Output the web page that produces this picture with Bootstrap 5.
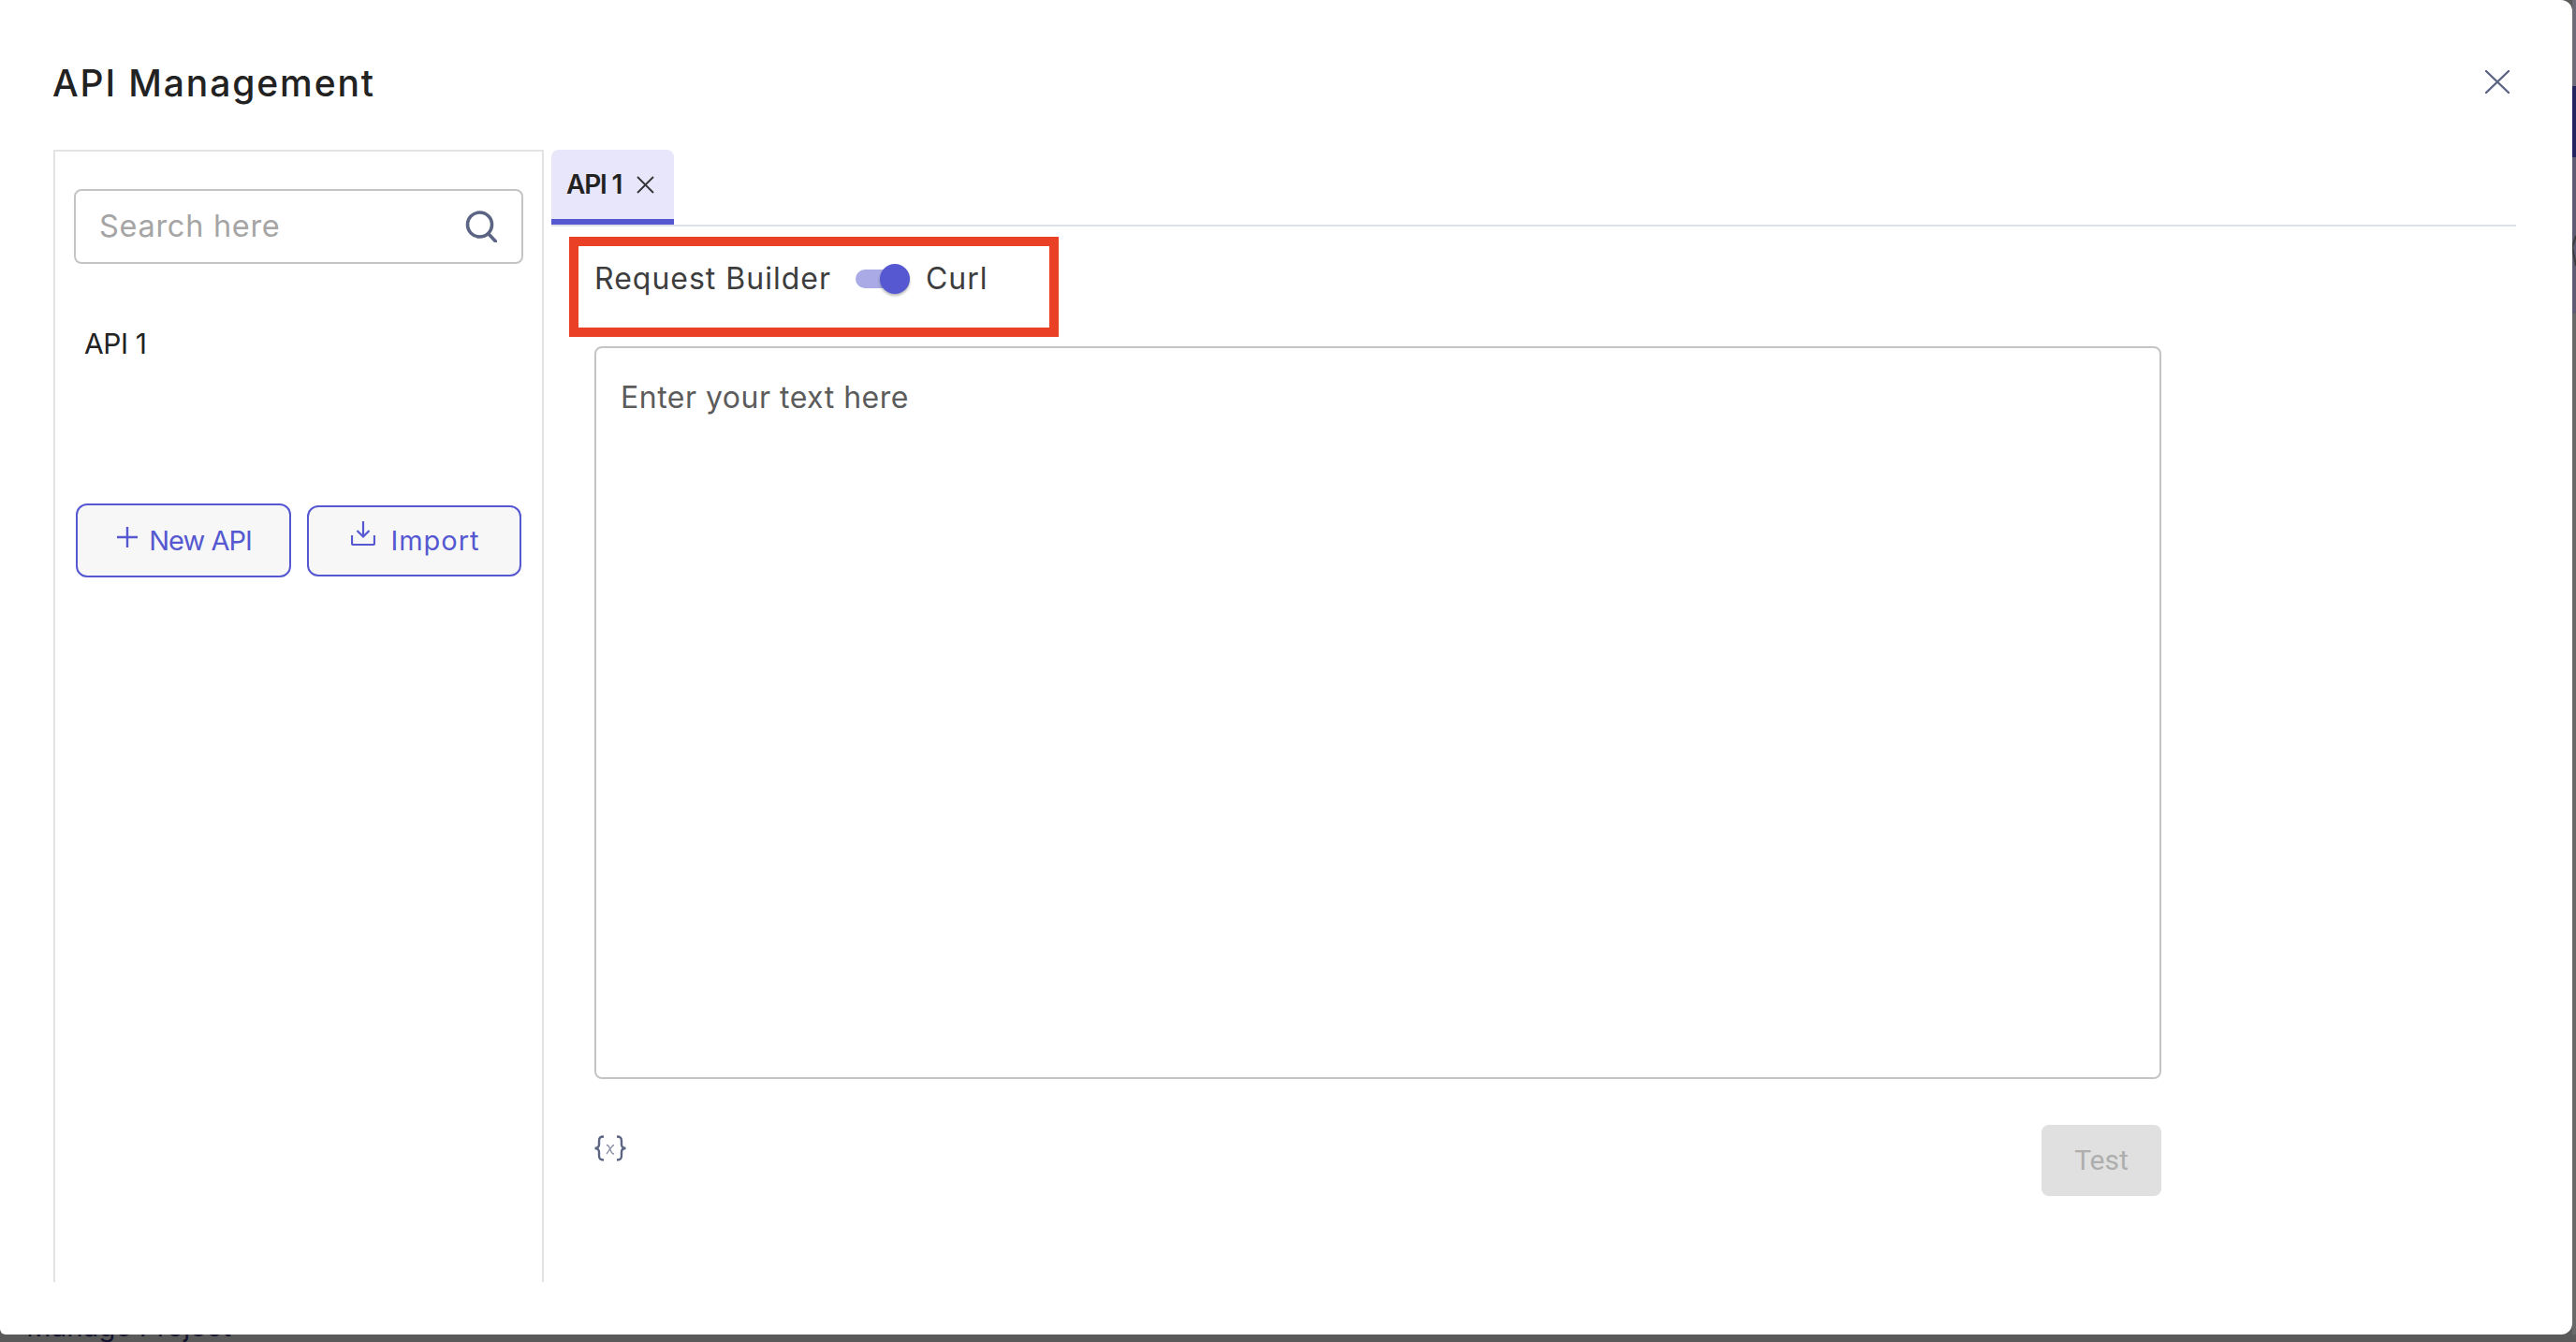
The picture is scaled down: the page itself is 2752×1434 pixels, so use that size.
<!DOCTYPE html>
<html lang="en">
<head>
<meta charset="utf-8">
<title>API Management</title>
<link href="https://cdn.jsdelivr.net/npm/bootstrap@5.3.0/dist/css/bootstrap.min.css" rel="stylesheet">
<style>
html,body{height:100%;}
body{background:#5a5a5a;overflow:hidden;font-family:"Inter","Liberation Sans",sans-serif;position:relative;}
.behind-text{position:absolute;left:28px;top:1400px;font-size:29.5px;color:#14142e;line-height:1.2;white-space:nowrap;}
.behind-strip{position:absolute;right:0;top:0;width:4px;height:1426px;background:linear-gradient(#6e6c78 0,#6e6c78 92px,#25235f 92px,#25235f 168px,#5f5b73 168px,#5f5b73 335px,#686868 335px);}
.behind-strip svg{display:block;margin-top:250px;}
.dialog{position:relative;width:2748px;height:1426px;background:#fff;border-radius:0 12px 12px 6px;padding:0 60px 0 57px;}
.dlg-title{height:160px;}
.dlg-title h5{font-size:39px;font-weight:500;color:#222;margin:16px 0 0 -1px;letter-spacing:1.9px;line-height:1;}
.side-pane{width:524px;height:1210px;border:solid #e3e3e3;border-width:2px 2px 0 2px;padding:40px 20px 0 20px;flex:none;}
.search-box{height:80px;border:2px solid #c4c4c4;border-radius:8px;padding:0 26px 0 25px;color:#a5a5a5;font-size:32.5px;letter-spacing:.7px;background:#fff;}
.api-item{font-size:30px;color:#222;margin:67px 0 0 11px;line-height:36px;height:36px;letter-spacing:-.4px;}
.btn-row{margin-top:153px;gap:17px;padding:0 2px;}
.btn-api{height:79px;width:230px;background:#f7f7f7;border:2px solid #5558d0;border-radius:12px;color:#5558d0;font-size:29px;padding:0 0 0 2px;display:flex;align-items:center;justify-content:center;gap:12px;}
.btn-api:hover{background:#f7f7f7;color:#5558d0;border-color:#5558d0;}
.btn-new span{letter-spacing:-1px;}
.btn-new svg{margin-bottom:8px;}
.btn-imp{height:76px;width:229px;gap:16px;padding-left:3px;}
.btn-imp span{letter-spacing:1px;}
.btn-imp svg{margin-bottom:16px;}
.main-pane{flex:1;margin-left:8px;min-width:0;}
.tab-strip{border-bottom:2px solid #dee2e6;height:82px;}
.tab-item{width:131px;height:80px;background:#e8e6fb;border-bottom:6px solid #5558d0;border-radius:8px 8px 0 0;padding-left:16px;gap:16px;font-size:28px;font-weight:600;color:#222;letter-spacing:-1.2px;}
.mode-box{width:523px;height:107px;margin:11px 0 0 19px;border:10px solid #ea4025;padding:0 0 17px 17px;font-size:32px;color:#3d3d3d;letter-spacing:1px;}
.switch-track{position:relative;width:50px;height:20px;background:#aaaae6;border-radius:10px;margin:0 25px 0 26px;}
.switch-thumb{position:absolute;right:-8px;top:-6px;width:32px;height:32px;border-radius:50%;background:#5558d0;box-shadow:0 2px 3px rgba(0,0,0,.3);}
.body-area{width:1674px;margin-left:46px;}
.text-box{height:783px;margin-top:10px;border:2px solid #c4c4c4;border-radius:8px;padding:33px 26px;font-size:32px;color:#5c5c5c;line-height:40px;letter-spacing:.5px;}
.foot-row{margin-top:49px;}
.btn-test{width:128px;height:76px;background:#e0e0e0;border:0;border-radius:8px;color:#aeaeae;font-size:30px;padding:0 0 2px;font-family:"Roboto","Inter",sans-serif;}
.btn-test:disabled{background:#e0e0e0;color:#aeaeae;opacity:1;}
.var-icon{width:36px;height:28px;margin:11px 0 0 -1px;}
.close-x{position:absolute;left:2655px;top:75px;width:26px;height:25px;background:none;border:0;padding:0;display:block;}
.close-x svg{display:block;}
</style>
</head>
<body>
<div class="behind-strip"><svg width="4" height="36" viewBox="0 0 4 36"><path d="M4 2 0 14 4 34" stroke="#3a3a3a" stroke-width="2" fill="none"/></svg></div>
<div class="behind-text">Manage Project</div>
<div class="dialog">
  <div class="dlg-title d-flex align-items-center"><h5>API Management</h5></div>
  <button class="close-x" aria-label="Close"><svg width="26" height="25" viewBox="0 0 26 25"><path d="M1 1 25 24M25 1 1 24" stroke="#5b6583" stroke-width="2.400" stroke-linecap="round" fill="none"/></svg></button>
  <div class="d-flex">
    <aside class="side-pane">
      <div class="search-box d-flex align-items-center justify-content-between">
        <span>Search here</span>
        <svg width="34" height="34" viewBox="0 0 34 34"><circle cx="15.500" cy="15" r="13" stroke="#5b6583" stroke-width="3.600" fill="none"/><path d="M25 25 32.500 33" stroke="#5b6583" stroke-width="3.600" stroke-linecap="round"/></svg>
      </div>
      <div class="api-item">API 1</div>
      <div class="btn-row d-flex align-items-center">
        <button class="btn btn-api btn-new"><svg width="22" height="22" viewBox="0 0 22 22"><path d="M11 0V22M0 11H22" stroke="#5558d0" stroke-width="2.400"/></svg><span>New API</span></button>
        <button class="btn btn-api btn-imp"><svg width="26" height="26" viewBox="0 0 26 26"><path d="M13 0V16M6.500 10 13 16.500 19.500 10" stroke="#5558d0" stroke-width="2.200" fill="none"/><path d="M1 15V23.500Q1 25 2.500 25H23.500Q25 25 25 23.500V15" stroke="#5558d0" stroke-width="2.200" fill="none"/></svg><span>Import</span></button>
      </div>
    </aside>
    <main class="main-pane">
      <div class="tab-strip">
        <div class="tab-item d-flex align-items-center">
          <span>API 1</span>
          <svg width="19" height="19" viewBox="0 0 19 19"><path d="M1 1 18 18M18 1 1 18" stroke="#333" stroke-width="1.800" fill="none"/></svg>
        </div>
      </div>
      <div class="mode-box d-flex align-items-center">
        <span>Request Builder</span>
        <span class="switch-track"><span class="switch-thumb"></span></span>
        <span>Curl</span>
      </div>
      <div class="body-area">
        <div class="text-box">Enter your text here</div>
        <div class="foot-row d-flex justify-content-between align-items-start">
          <svg class="var-icon" viewBox="0 0 36 28"><path d="M11 1.500C7 1.500 6 3 6 6V10C6 12.500 4.500 14 1.500 14 4.500 14 6 15.500 6 18V22C6 25 7 26.500 11 26.500M25 1.500C29 1.500 30 3 30 6V10C30 12.500 31.500 14 34.500 14 31.500 14 30 15.500 30 18V22C30 25 29 26.500 25 26.500" stroke="#5b6583" stroke-width="2.400" fill="none"/><path d="M14 10.500C16.500 10.500 17 13 18 15.500 19 18.500 20 20 22 20M22 10.500C19.500 11 16.500 17 14 20" stroke="#8a90a4" stroke-width="1.300" fill="none"/></svg>
          <button class="btn btn-test" disabled>Test</button>
        </div>
      </div>
    </main>
  </div>
</div>
<script src="https://cdn.jsdelivr.net/npm/bootstrap@5.3.0/dist/js/bootstrap.bundle.min.js"></script>
</body>
</html>
